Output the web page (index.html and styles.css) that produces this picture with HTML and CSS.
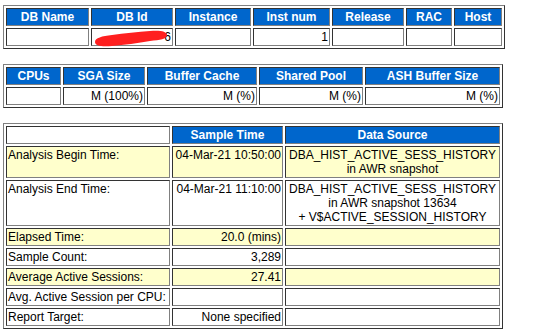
FILE: index.html
```html
<!DOCTYPE html>
<html lang="en">
<head>
  <meta charset="UTF-8">
  <title>ASH Report</title>
  <link rel="stylesheet" href="styles.css">
</head>
<body>

<table class="report">
  <tr>
    <th class="w-dbname">DB Name</th>
    <th class="w-dbid">DB Id</th>
    <th class="w-inst">Instance</th>
    <th class="w-instnum">Inst num</th>
    <th class="w-release">Release</th>
    <th class="w-rac">RAC</th>
    <th class="w-host">Host</th>
  </tr>
  <tr>
    <td class="plain"></td>
    <td class="plain num redacted">
      <span>6</span>
      <!-- marker stroke drawn over the id -->
      <svg class="scribble" width="74" height="17" viewBox="0 0 74 17">
        <path d="M1 12 C1 8 8 6 18 5 C30 3 44 2 56 1 C65 0 73 1 73 5 C73 9 66 10 56 11 C44 13 30 15 18 16 C8 17 1 16 1 12 Z" fill="#ff1f1f"/>
      </svg>
    </td>
    <td class="plain"></td>
    <td class="plain num">1</td>
    <td class="plain"></td>
    <td class="plain"></td>
    <td class="plain"></td>
  </tr>
</table>

<table class="report">
  <tr>
    <th class="w-cpus">CPUs</th>
    <th class="w-sga">SGA Size</th>
    <th class="w-cache">Buffer Cache</th>
    <th class="w-pool">Shared Pool</th>
    <th class="w-ashbuf">ASH Buffer Size</th>
  </tr>
  <tr>
    <td class="plain"></td>
    <td class="plain num">M (100%)</td>
    <td class="plain num">M (%)</td>
    <td class="plain num">M (%)</td>
    <td class="plain num">M (%)</td>
  </tr>
</table>

<table class="report">
  <tr>
    <td class="plain w-label"></td>
    <th class="w-time">Sample Time</th>
    <th class="w-source">Data Source</th>
  </tr>
  <tr>
    <td class="shade">Analysis Begin Time:</td>
    <td class="shade num">04-Mar-21 10:50:00</td>
    <td class="shade mid">DBA_HIST_ACTIVE_SESS_HISTORY<br>in AWR snapshot</td>
  </tr>
  <tr>
    <td class="plain">Analysis End Time:</td>
    <td class="plain num">04-Mar-21 11:10:00</td>
    <td class="plain mid">DBA_HIST_ACTIVE_SESS_HISTORY<br>in AWR snapshot 13634<br>+ V$ACTIVE_SESSION_HISTORY</td>
  </tr>
  <tr>
    <td class="shade">Elapsed Time:</td>
    <td class="shade num">20.0 (mins)</td>
    <td class="shade"></td>
  </tr>
  <tr>
    <td class="plain">Sample Count:</td>
    <td class="plain num">3,289</td>
    <td class="plain"></td>
  </tr>
  <tr>
    <td class="shade">Average Active Sessions:</td>
    <td class="shade num">27.41</td>
    <td class="shade"></td>
  </tr>
  <tr>
    <td class="plain">Avg. Active Session per CPU:</td>
    <td class="plain num"></td>
    <td class="plain"></td>
  </tr>
  <tr>
    <td class="plain">Report Target:</td>
    <td class="plain num">None specified</td>
    <td class="plain"></td>
  </tr>
</table>

</body>
</html>
```

FILE: styles.css
```css
body {
  margin: 5px 3px;
  background: #fff;
  font-family: 'Liberation Sans', Arial, sans-serif;
  font-size: 12px;
  line-height: 14px;
  color: #000;
}
.report {
  width: 500px;
  table-layout: fixed;
  border-collapse: separate;
  border-spacing: 2px;
  border: 1px solid;
  border-color: #808080 #333 #333 #808080;
  margin-bottom: 15px;
}
th, td {
  box-sizing: border-box;
  padding: 1px;
  border: 1px solid;
  border-color: #333 #808080 #808080 #333;
  height: 18px;
}
th {
  font-weight: bold;
  color: #fff;
  background: #0066cc;
  text-align: center;
  vertical-align: middle;
  white-space: nowrap;
}
td {
  vertical-align: top;
  text-align: left;
  white-space: nowrap;
}
td.plain {
  background: #fff;
}
td.shade {
  background: #ffffcc;
}
td.num {
  text-align: right;
}
td.mid {
  text-align: center;
}
.redacted {
  position: relative;
}
.scribble {
  position: absolute;
  left: 2px;
  top: 1px;
}

/* column widths */
.w-dbname { width: 83px; }
.w-dbid { width: 82px; }
.w-inst { width: 76px; }
.w-instnum { width: 77px; }
.w-release { width: 72px; }
.w-rac { width: 46px; }
.w-host { width: 48px; }

.w-cpus { width: 55px; }
.w-sga { width: 82px; }
.w-cache { width: 110px; }
.w-pool { width: 104px; }
.w-ashbuf { width: 135px; }

.w-label { width: 164px; }
.w-time { width: 111px; }
.w-source { width: 215px; }
```
